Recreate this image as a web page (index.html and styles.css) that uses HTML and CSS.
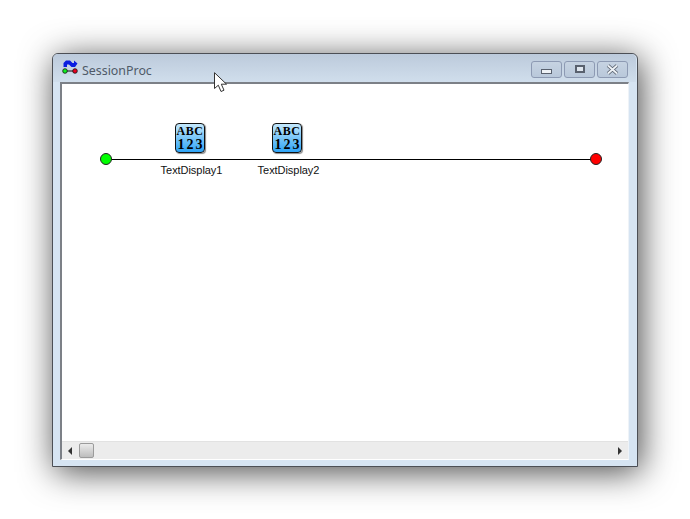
FILE: index.html
```html
<!DOCTYPE html>
<html lang="en">
<head>
  <meta charset="UTF-8" />
  <title>SessionProc</title>
  <link rel="stylesheet" href="styles.css">
</head>
<body>
  <div class="window">
    <div class="titlebar">
      <svg class="app-icon" width="16" height="14" viewBox="0 0 16 14">
        <path d="M1.500 7V3L4 .5H8L10.500 3H12V.5L15.500 3.500 13 7H9.500L7 4.500H5V7Z" fill="#0a1ee0"/>
        <path d="M3 11H13" stroke="#111" stroke-width="1"/>
        <circle cx="3" cy="11" r="2.300" fill="#10f020" stroke="#111" stroke-width=".8"/>
        <circle cx="13" cy="11" r="2.300" fill="#e80020" stroke="#111" stroke-width=".8"/>
      </svg>
      <span class="title">SessionProc</span>
      <div class="buttons">
        <div class="win-btn"><span class="min-glyph"></span></div>
        <div class="win-btn"><span class="max-glyph"></span></div>
        <div class="win-btn">
          <svg width="13" height="11" viewBox="0 0 13 11">
            <path d="M2 1.500L11 9.500M11 1.500L2 9.500" stroke="#59616e" stroke-width="3.600"/>
            <path d="M2 1.500L11 9.500M11 1.500L2 9.500" stroke="#eef2f6" stroke-width="1.800"/>
          </svg>
        </div>
      </div>
    </div>

    <div class="client">
      <div class="canvas">
        <div class="flow-line"></div>
        <div class="dot start"></div>
        <div class="dot end"></div>

        <div class="node node-1">
          <div class="node-icon"><span>ABC</span><span class="digits">123</span></div>
          <div class="node-label">TextDisplay1</div>
        </div>
        <div class="node node-2">
          <div class="node-icon"><span>ABC</span><span class="digits">123</span></div>
          <div class="node-label">TextDisplay2</div>
        </div>
      </div>

      <div class="scrollbar">
        <div class="arrow arrow-left"></div>
        <div class="thumb"></div>
        <div class="track"></div>
        <div class="arrow arrow-right"></div>
      </div>
    </div>
  </div>

  <svg class="cursor" width="14" height="21" viewBox="0 0 14 21">
    <path d="M.5 .7V16.500L4.300 13.200 7 19.500 10 18.200 7.300 12.200H12.500Z" fill="#fff" stroke="#333" stroke-width="1"/>
  </svg>
</body>
</html>
```

FILE: styles.css
```css
* {
  box-sizing: border-box;
}

html, body {
  height: 100%;
}

body {
  margin: 0;
  padding: 53px 52px 52px 52px;
  background: #fff;
  font-family: 'Liberation Sans', Arial, sans-serif;
  overflow: hidden;
}

.window {
  display: flex;
  flex-direction: column;
  width: 586px;
  height: 414px;
  padding: 0 8px 6px 7px;
  background: #d6e4f2;
  border: 1px solid #4c4f55;
  border-radius: 6px 6px 0 0;
  box-shadow: 3px 5px 34px rgba(0,0,0,0.72);
}

.titlebar {
  display: flex;
  align-items: center;
  flex: none;
  height: 28px;
  margin: 0 -7px;
  padding: 0 8px 0 9px;
  background: linear-gradient(#bccadb, #d0deec);
  border-radius: 5px 5px 0 0;
}

.app-icon {
  flex: none;
  margin-top: -2px;
}

.title {
  margin-left: 4px;
  margin-top: 4px;
  font-family: 'Noto Sans', sans-serif;
  font-size: 12.400px;
  color: #4f5a68;
}

.buttons {
  display: flex;
  gap: 2px;
  margin-left: auto;
  margin-top: 2px;
}

.win-btn {
  display: flex;
  align-items: center;
  justify-content: center;
  width: 31px;
  height: 17px;
  background: linear-gradient(#c6d3e2, #b9c8da);
  border: 1px solid #8d9ab3;
  border-radius: 3px;
}

.min-glyph {
  width: 11px;
  height: 5px;
  margin-top: 5px;
  background: #eef2f6;
  border: 1px solid #59616e;
}

.max-glyph {
  width: 10px;
  height: 8px;
  background: #dfe6ee;
  border: 2px solid #59616e;
}

.client {
  display: flex;
  flex-direction: column;
  flex: 1;
  background: #fff;
  border-top: 2px solid #7c8087;
  border-left: 2px solid #7c8087;
  border-right: 1px solid #eef3f8;
  border-bottom: 1px solid #fff;
}

.canvas {
  position: relative;
  flex: 1;
}

.flow-line {
  position: absolute;
  left: 44px;
  top: 75px;
  width: 490px;
  height: 1px;
  background: #000;
}

.dot {
  position: absolute;
  top: 69px;
  width: 12px;
  height: 12px;
  border: 1px solid #222;
  border-radius: 50%;
}

.start {
  left: 38px;
  background: #00ff00;
}

.end {
  left: 528px;
  background: #ff0000;
}

.node {
  position: absolute;
  top: 39px;
  display: flex;
  flex-direction: column;
  align-items: center;
  width: 80px;
}

.node-1 {
  left: 88px;
}

.node-2 {
  left: 185px;
}

.node-icon {
  display: flex;
  flex-direction: column;
  align-items: center;
  width: 30px;
  height: 30px;
  font-family: 'Liberation Serif', serif;
  font-weight: bold;
  font-size: 12px;
  line-height: 14px;
  letter-spacing: 0.500px;
  color: #000;
  background: linear-gradient(#c4e8fc, #2ea4f6);
  border: 1px solid #111;
  border-radius: 4px;
  box-shadow: 1px 1px 1px #888;
}

.digits {
  font-size: 14px;
  letter-spacing: 2px;
  margin-right: -2px;
}

.node-label {
  margin-top: 11px;
  padding-left: 3px;
  font-size: 11px;
  line-height: 13px;
  letter-spacing: -0.050px;
  color: #111;
  white-space: nowrap;
}

.scrollbar {
  display: flex;
  align-items: center;
  flex: none;
  height: 18px;
  background: #ececec;
  border-top: 1px solid #e2e2e2;
}

.track {
  flex: 1;
}

.thumb {
  flex: none;
  width: 15px;
  height: 15px;
  margin-left: 7px;
  background: linear-gradient(#ebebeb, #bdbdbd);
  border: 1px solid #9b9b9b;
  border-radius: 2px;
}

.arrow {
  flex: none;
  width: 0;
  height: 0;
  border-top: 4px solid transparent;
  border-bottom: 4px solid transparent;
}

.arrow-left {
  margin-left: 6px;
  border-right: 4px solid #333;
}

.arrow-right {
  margin-right: 6px;
  border-left: 4px solid #333;
}

.cursor {
  position: absolute;
  left: 214px;
  top: 72px;
}
```
